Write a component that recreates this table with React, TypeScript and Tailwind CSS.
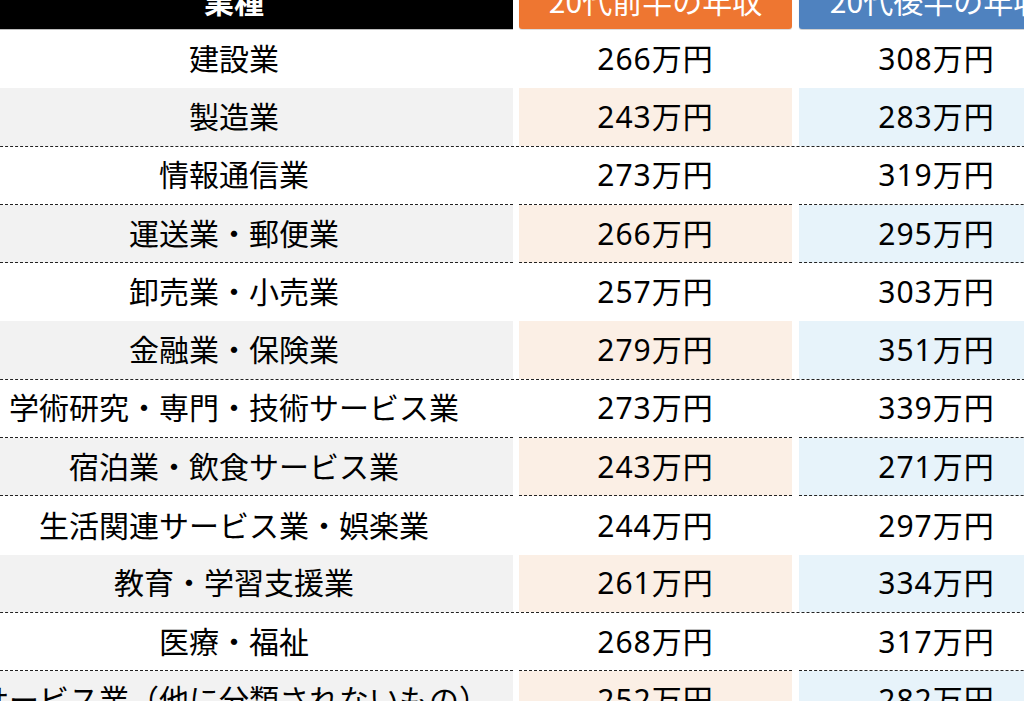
const rows = [
  { name: "建設業", a: "266万円", b: "308万円", line: "none" },
  { name: "製造業", a: "243万円", b: "283万円", line: "full" },
  { name: "情報通信業", a: "273万円", b: "319万円", line: "cell" },
  { name: "運送業・郵便業", a: "266万円", b: "295万円", line: "cell" },
  { name: "卸売業・小売業", a: "257万円", b: "303万円", line: "none" },
  { name: "金融業・保険業", a: "279万円", b: "351万円", line: "full" },
  { name: "学術研究・専門・技術サービス業", a: "273万円", b: "339万円", line: "cell" },
  { name: "宿泊業・飲食サービス業", a: "243万円", b: "271万円", line: "cell" },
  { name: "生活関連サービス業・娯楽業", a: "244万円", b: "297万円", line: "none" },
  { name: "教育・学習支援業", a: "261万円", b: "334万円", line: "full" },
  { name: "医療・福祉", a: "268万円", b: "317万円", line: "cell" },
  { name: "サービス業（他に分類されないもの）", a: "252万円", b: "282万円", line: "none" },
]

const numFont = { fontFamily: '"Noto Sans", "Noto Sans CJK JP", sans-serif' }

export default function App() {
  return (
    <div
      className="w-[1024px] h-[701px] overflow-hidden bg-white text-black"
      style={{ fontFamily: '"Noto Sans CJK JP", "Noto Sans", sans-serif' }}
    >
      <div className="w-[1130px] -ml-[45px] -mt-[30px] flex flex-col text-[30px] leading-none">
        {/* header */}
        <div className="flex h-[60px] gap-[6px]">
          <div className="shrink-0 w-[558px] flex items-center justify-center bg-black text-white font-bold border-b border-[#bdbdbd]">
            業種
          </div>
          <div className="shrink-0 w-[273px] h-[59px] flex items-center justify-center bg-[#ee7631] text-white rounded-b-[3px] shadow-[0_1px_1px_rgba(0,0,0,0.15)]">
            20代前半の年収
          </div>
          <div className="shrink-0 ml-px w-[275px] h-[59px] flex items-center justify-center bg-[#4f82bf] text-white rounded-b-[3px] shadow-[0_1px_1px_rgba(0,0,0,0.2)]">
            20代後半の年収
          </div>
        </div>

        {rows.map((r, i) => {
          const colored = i % 2 === 1
          const cellLine = r.line === "cell" ? "border-b border-dashed border-[#222]" : ""
          return (
            <div
              key={i}
              className={
                "flex h-[58.3px] gap-[6px] " +
                (r.line === "full" ? "border-b border-dashed border-[#222]" : "")
              }
            >
              <div
                className={
                  "shrink-0 w-[558px] pb-[4px] flex items-center justify-center whitespace-nowrap " +
                  (colored ? "bg-[#f2f2f2] " : "bg-white ") +
                  cellLine
                }
              >
                {r.name}
              </div>
              <div
                style={numFont}
                className={
                  "shrink-0 w-[273px] flex items-center justify-center tracking-[1px] " +
                  (colored ? "bg-[#fbefe5] " : "bg-white ") +
                  cellLine
                }
              >
                {r.a}
              </div>
              <div
                style={numFont}
                className={
                  "shrink-0 ml-px w-[275px] flex items-center justify-center tracking-[1px] " +
                  (colored ? "bg-[#e7f3fa] " : "bg-white ") +
                  cellLine
                }
              >
                {r.b}
              </div>
            </div>
          )
        })}
      </div>
    </div>
  )
}
